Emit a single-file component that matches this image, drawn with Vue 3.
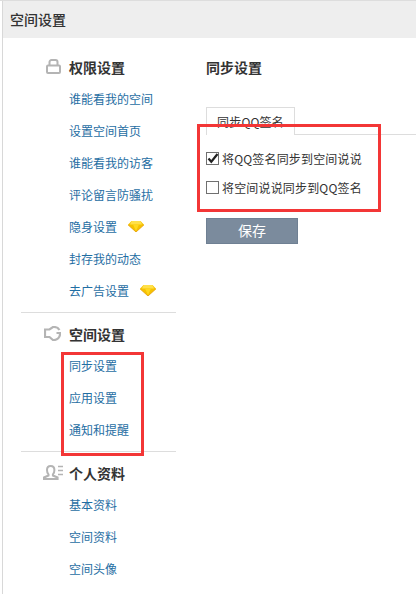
<script setup>
const sections = [
  { title: '权限设置', icon: 'lock', items: [
    { label: '谁能看我的空间' }, { label: '设置空间首页' }, { label: '谁能看我的访客' }, { label: '评论留言防骚扰' },
    { label: '隐身设置', gem: true }, { label: '封存我的动态' }, { label: '去广告设置', gem: true } ] },
  { title: '空间设置', icon: 'space', items: [ { label: '同步设置' }, { label: '应用设置' }, { label: '通知和提醒' } ] },
  { title: '个人资料', icon: 'person', items: [ { label: '基本资料' }, { label: '空间资料' }, { label: '空间头像' } ] },
]
</script>

<template>
  <div class="page">
    <header class="top">空间设置</header>
    <div class="body">
      <aside class="side">
        <section v-for="s in sections" :key="s.title" class="sec">
          <h3 class="sec-title">
            <span class="sec-icon">
              <svg v-if="s.icon === 'lock'" class="ic-lock" width="15" height="15" viewBox="0 0 15 15" fill="none" stroke="#b4b4b4" stroke-width="2">
                <path d="M3.500 6V3a2 2 0 0 1 2-2h4a2 2 0 0 1 2 2v3" />
                <rect x="1" y="6.500" width="13" height="7.500" rx="1" />
              </svg>
              <svg v-else-if="s.icon === 'space'" class="ic-space" width="17" height="15" viewBox="0 0 17 15" fill="none" stroke="#b4b4b4" stroke-width="2.200">
                <path d="M15.500 4A6.500 6.500 0 0 0 10 1H9L5.500 3.500H1V11h4.500L9 14h1a6 6 0 0 0 6-6V7h-3.500" />
              </svg>
              <svg v-else class="ic-person" width="20" height="15" viewBox="0 0 20 15" fill="none" stroke="#b4b4b4" stroke-width="2">
                <path d="M5.500 9.500C4.500 8.500 4 7 4 5c0-2.500 1.300-4 3.700-4s3.700 1.500 3.700 4c0 2-.5 3.500-1.500 4.500v1l4.700 2V14H1v-1.500l4.500-2z" />
                <path d="M15 1.500h5M15 5.500h5M15 9.500h5" stroke-width="1.500" />
              </svg>
            </span>
            {{ s.title }}
          </h3>
          <a v-for="it in s.items" :key="it.label" class="link">
            {{ it.label }}
            <svg v-if="it.gem" class="gem" width="16" height="11" viewBox="0 0 16 11">
              <path d="M3.500 0h9L16 3.800 8 11 0 3.800z" fill="#f6c200" />
              <path d="M3.500 0h9l1.500 3.500H2z" fill="#ffe04a" />
              <path d="M5 3.500 8 10l3-6.500z" fill="#ffd820" />
              <path d="M0 3.800 8 11l8-7.200" fill="none" stroke="#e39a00" stroke-width=".8" />
            </svg>
          </a>
        </section>
      </aside>
      <main class="main">
        <h2 class="main-title">同步设置</h2>
        <div class="tabs"><span class="tab">同步QQ签名</span></div>
        <label class="row">
          <span class="box">
            <svg width="13" height="13" viewBox="0 0 13 13" fill="none" stroke="#222" stroke-width="2.200"><path d="M2.500 6.500 5.300 9.800 11.500 2" /></svg>
          </span>
          将QQ签名同步到空间说说
        </label>
        <label class="row"><span class="box"></span>将空间说说同步到QQ签名</label>
        <button class="save">保存</button>
      </main>
    </div>
    <div class="mark mark-menu"></div>
    <div class="mark mark-form"></div>
  </div>
</template>

<style>
html, body { margin: 0; background: #fff; }
</style>

<style scoped>
.page {
  position: relative;
  width: 416px;
  height: 594px;
  overflow: hidden;
  background: #fff;
  font-family: "Noto Sans CJK SC", "Liberation Sans", sans-serif;
  font-size: 12px;
  color: #333;
  box-sizing: border-box;
  border-top: 1px solid #ddd;
}
.top {
  margin-left: 2px;
  height: 37px;
  line-height: 37px;
  padding-left: 7px;
  background: #eee;
  border-left: 1px solid #d8d8d8;
  font-size: 14px;
  font-weight: 500;
  color: #333;
}
.body {
  display: flex;
  margin-left: 2px;
  border-left: 1px solid #d8d8d8;
  height: 556px;
  box-sizing: border-box;
}
.side { width: 155px; margin-left: 18px; padding-top: 13px; flex: none; }
.sec { padding-bottom: 6px; border-bottom: 1px solid #ddd; margin-bottom: 5px; }
.sec:last-child { border-bottom: 0; }
.sec-title {
  display: flex;
  align-items: center;
  height: 31px;
  margin: 0;
  padding-left: 48px;
  position: relative;
  font-size: 14px;
  font-weight: 700;
  color: #333;
}
.sec-icon { position: absolute; left: 0; top: 0; width: 48px; height: 31px; display: block; }
.sec-icon svg { position: absolute; }
.ic-lock { left: 25px; top: 8px; }
.ic-space { left: 23px; top: 8px; }
.ic-person { left: 22px; top: 8px; }
.link {
  display: flex;
  align-items: center;
  height: 32px;
  padding-left: 48px;
  color: #1f6ea3;
  font-size: 12px;
}
.gem { flex: none; margin-left: 11px; }
.main { margin-left: 30px; flex: 1; padding-top: 14px; min-width: 0; }
.main-title {
  margin: 0;
  height: 31px;
  line-height: 31px;
  font-size: 14px;
  font-weight: 700;
  color: #333;
}
.tabs {
  margin-top: 24px;
  height: 27px;
  border-bottom: 1px solid #ddd;
}
.tab {
  display: block;
  box-sizing: border-box;
  width: 89px;
  height: 28px;
  line-height: 27px;
  text-align: center;
  background: #fff;
  border: 1px solid #ddd;
  border-bottom: 0;
  color: #333;
  font-size: 12px;
  letter-spacing: 0.2px;
}
.row {
  display: flex;
  align-items: center;
  height: 29px;
  color: #333;
  font-size: 12px;
  letter-spacing: 0.17px;
}
.row:first-of-type { margin-top: 9px; }
.box {
  width: 13px;
  height: 13px;
  margin-right: 3px;
  border: 1px solid #707070;
  box-sizing: border-box;
  background: #fff;
  position: relative;
  flex: none;
}
.box svg { position: absolute; left: -1px; top: -1px; }
.save {
  display: block;
  width: 92px;
  height: 26px;
  margin-top: 16px;
  padding: 0 0 3px;
  border: 1px solid #6f8093;
  background: #7b8b9d;
  color: #fff;
  font-family: inherit;
  font-size: 14px;
}
.mark { position: absolute; border: 3px solid #f33636; box-sizing: border-box; }
.mark-menu { left: 61px; top: 351px; width: 83px; height: 104px; }
.mark-form { left: 197px; top: 123px; width: 184px; height: 88px; }
</style>
